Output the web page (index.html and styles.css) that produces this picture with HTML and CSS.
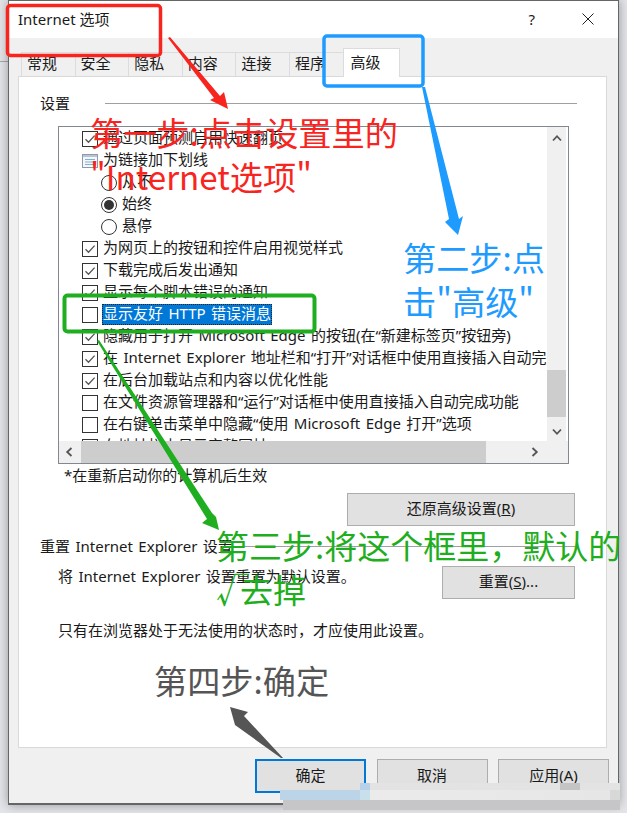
FILE: index.html
```html
<!DOCTYPE html>
<html lang="zh-CN">
<head>
  <meta charset="UTF-8" />
  <title>Internet 选项</title>
  <link rel="stylesheet" href="styles.css">
</head>
<body>

<svg class="defs" width="0" height="0">
  <symbol id="tick" viewBox="0 0 16 16"><path d="M3.5 8.2 6.5 11.2 12.6 4.6" fill="none" stroke="#555" stroke-width="1.3"/></symbol>
  <symbol id="chev" viewBox="0 0 10 10"><path d="M2.5 1 6.8 5 2.5 9" fill="none" stroke="#555" stroke-width="1.8"/></symbol>
</svg>

<div class="dialog">
  <div class="titlebar">
    <span class="title">Internet 选项</span>
    <span class="help">?</span>
    <svg class="close" width="12" height="12" viewBox="0 0 12 12"><path d="M.5.5 11.5 11.5M11.5.5.5 11.5" stroke="#222" stroke-width="1" fill="none"/></svg>
  </div>

  <div class="tabs">
    <span class="tab">常规</span>
    <span class="tab">安全</span>
    <span class="tab">隐私</span>
    <span class="tab">内容</span>
    <span class="tab">连接</span>
    <span class="tab">程序</span>
    <span class="tab active">高级</span>
  </div>

  <div class="panel">
    <div class="group-head"><span>设置</span><i></i></div>

    <div class="list">
      <div class="list-main">
        <div class="rows">
          <div class="row"><span class="check"><svg><use href="#tick"/></svg></span>通过页面预测启用快速翻页</div>
          <div class="row">
            <svg class="page-icon" width="17" height="16" viewBox="0 0 17 16">
              <rect x=".5" y="1.5" width="15" height="13" fill="#f4f6f9" stroke="#8f9aa8"/>
              <rect x="1" y="2" width="14" height="2" fill="#b9c4d2"/>
              <path d="M3 6.5h10M3 9h10M3 11.5h10" stroke="#7fb0dc"/>
            </svg>为链接加下划线
          </div>
          <div class="row sub"><span class="radio"></span>从不</div>
          <div class="row sub"><span class="radio on"></span>始终</div>
          <div class="row sub"><span class="radio"></span>悬停</div>
          <div class="row"><span class="check"><svg><use href="#tick"/></svg></span>为网页上的按钮和控件启用视觉样式</div>
          <div class="row"><span class="check"><svg><use href="#tick"/></svg></span>下载完成后发出通知</div>
          <div class="row"><span class="check"><svg><use href="#tick"/></svg></span>显示每个脚本错误的通知</div>
          <div class="row"><span class="check"></span><span class="selected">显示友好 HTTP 错误消息</span></div>
          <div class="row"><span class="check"><svg><use href="#tick"/></svg></span>隐藏用于打开 Microsoft Edge 的按钮(在“新建标签页”按钮旁)</div>
          <div class="row"><span class="check"><svg><use href="#tick"/></svg></span>在 Internet Explorer 地址栏和“打开”对话框中使用直接插入自动完成</div>
          <div class="row"><span class="check"><svg><use href="#tick"/></svg></span>在后台加载站点和内容以优化性能</div>
          <div class="row"><span class="check"></span>在文件资源管理器和“运行”对话框中使用直接插入自动完成功能</div>
          <div class="row"><span class="check"></span>在右键单击菜单中隐藏“使用 Microsoft Edge 打开”选项</div>
          <div class="row"><span class="check"></span>在地址栏中显示完整网址</div>
        </div>
        <div class="vscroll">
          <svg class="arrow up"><use href="#chev"/></svg>
          <div class="vthumb"></div>
          <svg class="arrow down"><use href="#chev"/></svg>
        </div>
      </div>
      <div class="hscroll">
        <svg class="arrow left"><use href="#chev"/></svg>
        <div class="hthumb"></div>
        <svg class="arrow"><use href="#chev"/></svg>
      </div>
    </div>

    <p class="restart-note">*在重新启动你的计算机后生效</p>

    <div class="restore-wrap"><button class="btn btn-wide">还原高级设置(<u>R</u>)</button></div>

    <div class="group-head reset-head"><span>重置 Internet Explorer 设置</span><i></i></div>

    <div class="reset-row">
      <span>将 Internet Explorer 设置重置为默认设置。</span>
      <button class="btn btn-reset">重置(<u>S</u>)...</button>
    </div>
    <p class="reset-note">只有在浏览器处于无法使用的状态时，才应使用此设置。</p>
  </div>

  <div class="actions">
    <button class="btn btn-foot default">确定</button>
    <button class="btn btn-foot">取消</button>
    <button class="btn btn-foot">应用(A)</button>
  </div>
</div>

<!-- annotations drawn on top of the screenshot -->
<svg class="marks" width="627" height="813" viewBox="0 0 627 813">
  <rect x="7.5" y="5.5" width="153" height="50" rx="3" fill="none" stroke="#f8251f" stroke-width="3.5"/>
  <polygon points="168,38 170,37 220,96 224,92 228,109 210,100 214,98" fill="#f8251f"/>
  <rect x="324" y="36" width="99" height="50" rx="3" fill="none" stroke="#1e9bff" stroke-width="3.5"/>
  <polygon points="422,87 425,87 459,219 463,216 458,235 445,222 449,219" fill="#1e9bff"/>
  <rect x="64.5" y="295.5" width="250" height="36" rx="3" fill="none" stroke="#1fae20" stroke-width="4"/>
  <polygon points="97,341 99,340 212,513 216,517 219,530 202,523 207,519" fill="#1fae20"/>
  <polygon points="283,758 281,758 235,725 230,707 248,712 244,716" fill="#555"/>
</svg>

<div class="note note-red">第一步:点击设置里的<br>"Internet选项"</div>
<div class="note note-blue">第二步:点<br>击"高级"</div>
<div class="note note-green">第三步:将这个框里，默认的<br><span class="root">√</span>去掉</div>
<div class="note note-gray">第四步:确定</div>

<div class="smear">
  <div class="smear-top"></div>
  <div class="smear-mid"></div>
  <div class="smear-bottom"></div>
</div>

</body>
</html>
```

FILE: styles.css
```css
html, body {
  margin: 0;
  padding: 0;
}
body {
  width: 627px;
  height: 813px;
  overflow: hidden;
  position: relative;
  background: linear-gradient(#a8a8a8, #a8a8a8) 0 61px / 8px 1px no-repeat, #e4e5e9;
  color: #1a1a1a;
  font-family: "Noto Sans", "Noto Sans CJK SC", sans-serif;
  font-size: 15px;
  line-height: 20px;
  word-spacing: 1.5px;
}
.defs {
  position: absolute;
}
.dialog {
  margin-left: 8px;
  width: 611px;
  height: 805px;
  box-sizing: border-box;
  border: 1px solid #666;
  border-bottom-width: 2px;
  background: #f0f0f0;
  box-shadow: 0 0 10px rgba(0,0,0,0.35);
  display: flex;
  flex-direction: column;
}
.titlebar {
  height: 37px;
  background: #fff;
  display: flex;
  align-items: center;
  padding: 0 11px 0 9px;
  flex: none;
}
.title {
  flex: 1;
  margin-top: -1px;
  word-spacing: 0;
}
.help {
  margin-right: 47px;
  margin-top: -2px;
}
.close {
  margin: -1px 13px 0 0;
}
.tabs {
  height: 38px;
  box-sizing: border-box;
  padding: 10px 0 0 12px;
  display: flex;
  flex: none;
}
.tab {
  width: 53.6px;
  height: 24px;
  margin-top: 4px;
  box-sizing: border-box;
  border: 1px solid #dcdcdc;
  border-right: 0;
  border-bottom: 0;
  padding: 0 0 0 5px;
  line-height: 20px;
}
.tab.active {
  width: 57px;
  height: 29px;
  margin-top: 0;
  background: #fff;
  border-right: 1px solid #dcdcdc;
  padding: 3px 0 0 7px;
  position: relative;
  z-index: 1;
}
.panel {
  margin-left: 9px;
  width: 589px;
  height: 672px;
  box-sizing: border-box;
  background: #fff;
  border: 1px solid #d9d9d9;
  padding: 16px 0 0 21px;
  flex: none;
}
.group-head {
  display: flex;
  align-items: center;
  height: 20px;
  margin-right: 29px;
}
.group-head span {
  margin-right: 35px;
  white-space: nowrap;
}
.group-head i {
  flex: 1;
  height: 1px;
  background: #a0a0a0;
}
.list {
  margin: 13px 0 0 18px;
  width: 511px;
  height: 338px;
  box-sizing: border-box;
  border: 1px solid #828790;
  display: flex;
  flex-direction: column;
}
.list-main {
  height: 314px;
  display: flex;
}
.rows {
  flex: 1;
  min-width: 0;
  overflow: hidden;
  padding: 1px 0 0 23px;
  white-space: nowrap;
}
.row {
  height: 22px;
  display: flex;
  align-items: flex-start;
  line-height: 19px;
}
.row.sub {
  padding-left: 19px;
}
.check {
  width: 16px;
  height: 16px;
  box-sizing: border-box;
  border: 1px solid #333;
  background: #fff;
  margin: 3px 5px 0 0;
  flex: none;
  position: relative;
}
.check svg {
  position: absolute;
  left: -1px;
  top: -1px;
  width: 16px;
  height: 16px;
}
.radio {
  width: 16px;
  height: 16px;
  box-sizing: border-box;
  border: 1px solid #333;
  border-radius: 50%;
  margin: 3px 5px 0 0;
  flex: none;
  display: flex;
  align-items: center;
  justify-content: center;
}
.radio.on::after {
  content: "";
  width: 10px;
  height: 10px;
  border-radius: 50%;
  background: #333;
}
.page-icon {
  margin: 3px 4px 0 0;
  flex: none;
}
.selected {
  background: #0078d7;
  color: #fff;
  outline: 1px dotted #222;
  outline-offset: -1px;
  height: 21px;
  padding: 0 1px;
  margin-left: -1px;
}
.vscroll {
  width: 19px;
  margin-right: 2px;
  flex: none;
  background: #f0f0f0;
  display: flex;
  flex-direction: column;
  align-items: center;
  position: relative;
}
.vthumb {
  position: absolute;
  left: 0;
  right: 0;
  top: 243px;
  height: 47px;
  background: #cdcdcd;
}
.arrow {
  width: 10px;
  height: 10px;
  flex: none;
}
.arrow.up {
  transform: rotate(-90deg);
  margin-top: 6px;
}
.arrow.down {
  transform: rotate(90deg);
  margin-top: auto;
  margin-bottom: 4px;
}
.arrow.left {
  transform: rotate(180deg);
}
.hscroll {
  flex: 1;
  background: #f0f0f0;
  display: flex;
  align-items: center;
  padding: 0 28px 0 5px;
}
.hthumb {
  width: 405px;
  height: 100%;
  margin-left: 7px;
  background: #cdcdcd;
  margin-right: auto;
}
.restart-note {
  margin: 1px 0 0 24px;
}
.restore-wrap {
  display: flex;
  justify-content: flex-end;
  margin: 8px 31px 0 0;
}
.btn {
  font: inherit;
  word-spacing: inherit;
  color: inherit;
  background: #e1e1e1;
  border: 1px solid #adadad;
  padding: 0 0 3px;
  margin: 0;
  height: 33px;
}
.btn-wide {
  width: 228px;
}
.reset-head {
  margin-top: 10px;
}
.reset-head span {
  margin-right: 10px;
}
.reset-row {
  margin: 10px 31px 0 18px;
  display: flex;
  justify-content: space-between;
  align-items: flex-start;
}
.btn-reset {
  width: 133px;
}
.reset-note {
  margin: 21px 0 0 18px;
}
.actions {
  display: flex;
  gap: 10.5px;
  margin: 11px 9px 0 auto;
}
.btn-foot {
  width: 111px;
  height: 34px;
}
.btn-foot.default {
  border: 2px solid #0078d7;
}
.marks {
  position: absolute;
  left: 0;
  top: 0;
}
.note {
  position: absolute;
  font-family: "Noto Sans CJK SC", sans-serif;
  font-size: 33.2px;
  line-height: 44px;
  white-space: nowrap;
}
.note-red {
  left: 90px;
  top: 110px;
  color: #f8251f;
}
.note-blue {
  left: 403px;
  top: 235px;
  color: #1e9bff;
}
.note-green {
  left: 216px;
  top: 523px;
  color: #1fae20;
  font-size: 33px;
}
.root {
  margin-right: -9px;
}
.note-gray {
  left: 154px;
  top: 658px;
  color: #555;
}
.smear {
  position: absolute;
  left: 280px;
  top: 783px;
  width: 340px;
  height: 27px;
}
.smear-top {
  margin-left: 80px;
  height: 7px;
  background: linear-gradient(to right, #b7d2e8 0, #b7d2e8 10px, #e3e3e3 10px, #e3e3e3 200px, #c4c4c4 200px, #c4c4c4 220px, #e3e3e3 220px);
}
.smear-mid {
  height: 10px;
  background: linear-gradient(to right, #bcd4e8 0, #bcd4e8 80px, #c9dfec 80px, #c9dfec 90px, #ebebeb 90px, #e6e6e6 330px, #d8d8d8 330px);
}
.smear-bottom {
  margin-left: 3px;
  height: 10px;
  background: #c6c6c8;
}
```
